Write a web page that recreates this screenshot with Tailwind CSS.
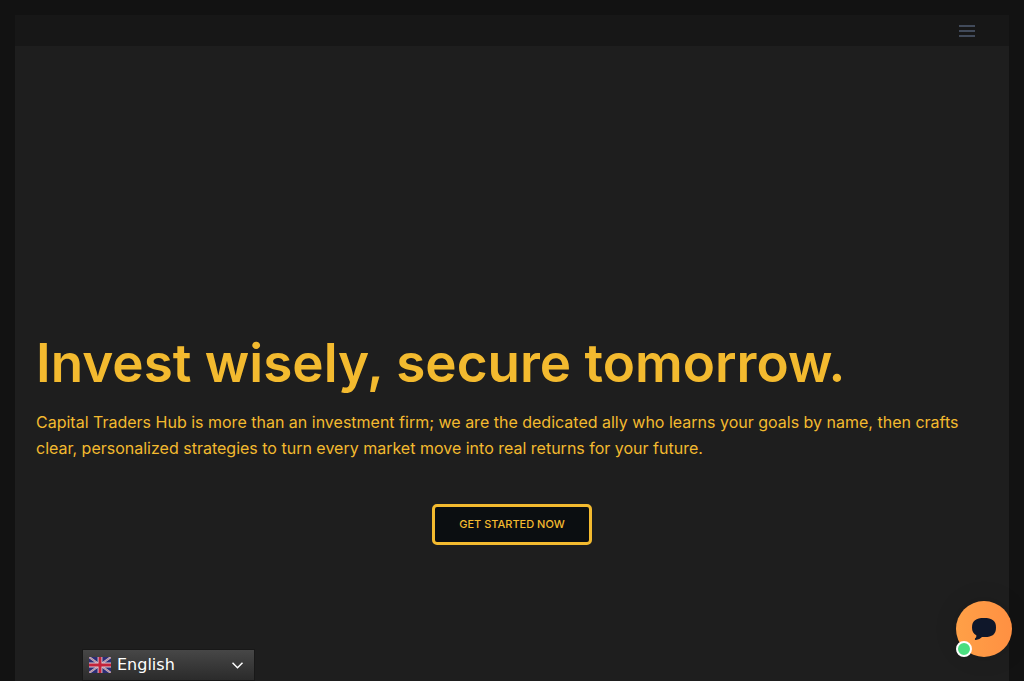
<!DOCTYPE html>
<html lang="en">
<head>
  <meta charset="UTF-8" />
  <meta name="viewport" content="width=device-width, initial-scale=1.0"/>
  <title>Capital Traders Hub</title>
  <script src="https://cdn.jsdelivr.net/npm/@tailwindcss/browser@4"></script>
</head>
<body class="bg-[#121212] h-screen overflow-hidden font-['Inter',sans-serif] text-[#f3ba2f]">
  <div class="h-full px-[15px] pt-[15px] flex flex-col">

    <header class="h-[31px] shrink-0 bg-[#171717] flex items-center justify-end pr-[34px]">
      <button aria-label="Menu">
        <svg class="block w-4 h-3" viewBox="0 0 16 12" fill="#414a5a" shape-rendering="crispEdges">
          <rect width="16" height="2" />
          <rect y="5" width="16" height="2" />
          <rect y="10" width="16" height="2" />
        </svg>
      </button>
    </header>

    <main class="flex-grow bg-[#1e1e1e] px-[21px] pt-[285px]">
      <h1 class="text-[53px] leading-[64px] font-semibold whitespace-nowrap">Invest wisely, secure tomorrow.</h1>
      <p class="mt-[14px] text-base leading-[26px]">Capital Traders Hub is more than an investment firm; we are the dedicated ally who learns your goals by name, then crafts clear, personalized strategies to turn every market move into real returns for your future.</p>
      <div class="mt-[43px] flex justify-center">
        <a href="#" class="w-40 h-[41px] flex items-center justify-center rounded-[5px] border-3 border-[#f3ba2f] bg-[#0b0e11] text-[11px] font-medium whitespace-nowrap">GET STARTED NOW</a>
      </div>
    </main>
  </div>

  <!-- Language switcher -->
  <div class="fixed left-[82px] bottom-0 w-[173px] h-8 flex items-center pl-[5px] pr-[10px] border border-[#181818] bg-linear-to-b from-[#474747] to-[#2b2b2b] font-['DejaVu_Sans',sans-serif] text-base text-white">
    <svg class="w-6 h-6 shrink-0" viewBox="0 0 24 24">
      <svg x="1" y="4" width="22" height="16" viewBox="0 0 60 40" preserveAspectRatio="none">
        <rect width="60" height="40" fill="#2c2c74" />
        <path d="M0 0L60 40M60 0L0 40" stroke="#c3bdcb" stroke-width="5.5" />
        <path d="M0 0L60 40M60 0L0 40" stroke="#b5586c" stroke-width="1.5" />
        <path d="M30 0V40M0 20H60" stroke="#d8ccd6" stroke-width="13" />
        <path d="M30 0V40M0 20H60" stroke="#c4233a" stroke-width="8" />
      </svg>
    </svg>
    <span class="ml-[5px] leading-6">English</span>
    <svg class="ml-auto w-3 h-2" viewBox="0 0 12 8" fill="none" stroke="#fff" stroke-width="1.5">
      <path d="M0.500 1.700L5.500 6.700L10.500 1.700" />
    </svg>
  </div>

  <!-- Chat launcher -->
  <button aria-label="Chat" class="fixed right-3 bottom-6 w-14 h-14 rounded-full bg-linear-to-r from-[#ffa047] to-[#ff9042] shadow-[0_0_24px_rgba(0,0,0,0.12)] flex items-center justify-center">
    <svg class="w-6 h-[22px]" viewBox="0 0 24 22" fill="#0f172a">
      <path d="M12 0C20 0 24 2.5 24 9.5C24 16.5 20 19 13 19H10C8.500 20.500 6.500 21.700 3.800 22C2.800 22.100 2.500 21 3.200 20.300C4.300 19.300 4.500 18.500 4.300 17.300C1.500 15.900 0 13.500 0 9.500C0 2.500 4 0 12 0Z" />
    </svg>
    <span class="absolute left-0 bottom-0 w-4 h-4 rounded-full border-2 border-white bg-[#4ade80]"></span>
  </button>
</body>
</html>
